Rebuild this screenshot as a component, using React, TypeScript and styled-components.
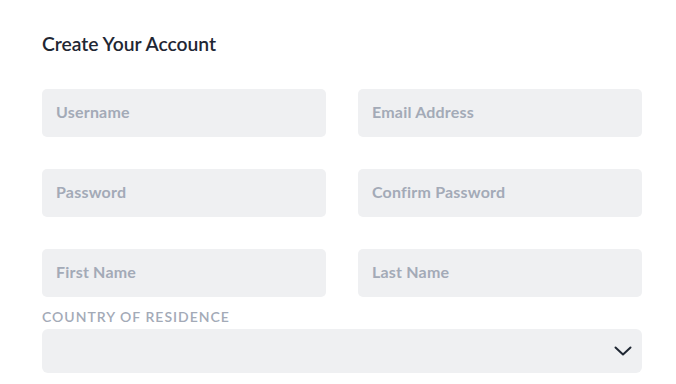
import styled, { createGlobalStyle } from "styled-components";

const GlobalStyle = createGlobalStyle`
  html, body {
    margin: 0;
    padding: 0;
    background: #ffffff;
    font-family: Lato, "Open Sans", sans-serif;
  }
  * {
    box-sizing: border-box;
  }
`;

const Page = styled.div`
  width: 676px;
  height: 384px;
  padding: 32px 34px 0 42px;
  overflow: hidden;
`;

const Title = styled.h2`
  margin: 0 0 33px;
  font-size: 19.3px;
  font-weight: 600;
  line-height: 24px;
  color: #1f2733;
`;

const Grid = styled.div`
  display: grid;
  grid-template-columns: 284px 284px;
  column-gap: 32px;
  row-gap: 32px;
`;

const Input = styled.input`
  width: 100%;
  height: 48px;
  padding: 0 14px 4px;
  border: none;
  border-radius: 5px;
  background: #eff0f2;
  font-family: Lato, sans-serif;
  font-size: 16px;
  font-weight: 700;
  letter-spacing: 0.2px;
  color: #1f2733;
  outline: none;
  &::placeholder {
    color: #a3aab7;
  }
`;

const Label = styled.div`
  margin-top: 11px;
  font-size: 14px;
  font-weight: 600;
  letter-spacing: 1px;
  line-height: 17px;
  color: #a3aab7;
`;

const SelectBox = styled.div`
  margin-top: 4px;
  width: 600px;
  height: 44px;
  border-radius: 6px;
  background: #eff0f2;
  display: flex;
  align-items: center;
  justify-content: flex-end;
  padding-right: 10px;
`;

const Chevron = () => (
  <svg width="18" height="10" viewBox="0 0 18 10" fill="none">
    <path d="M1.5 1.5 L9 8.5 L16.5 1.5" stroke="#1f2733" strokeWidth="2" strokeLinecap="round" strokeLinejoin="round" />
  </svg>
);

const App = () => {
  return (
    <Page>
      <GlobalStyle />
      <Title>Create Your Account</Title>
      <Grid>
        <Input type="text" placeholder="Username" />
        <Input type="email" placeholder="Email Address" />
        <Input type="password" placeholder="Password" />
        <Input type="password" placeholder="Confirm Password" />
        <Input type="text" placeholder="First Name" />
        <Input type="text" placeholder="Last Name" />
      </Grid>
      <Label>COUNTRY OF RESIDENCE</Label>
      <SelectBox>
        <Chevron />
      </SelectBox>
    </Page>
  );
};

export default App;
